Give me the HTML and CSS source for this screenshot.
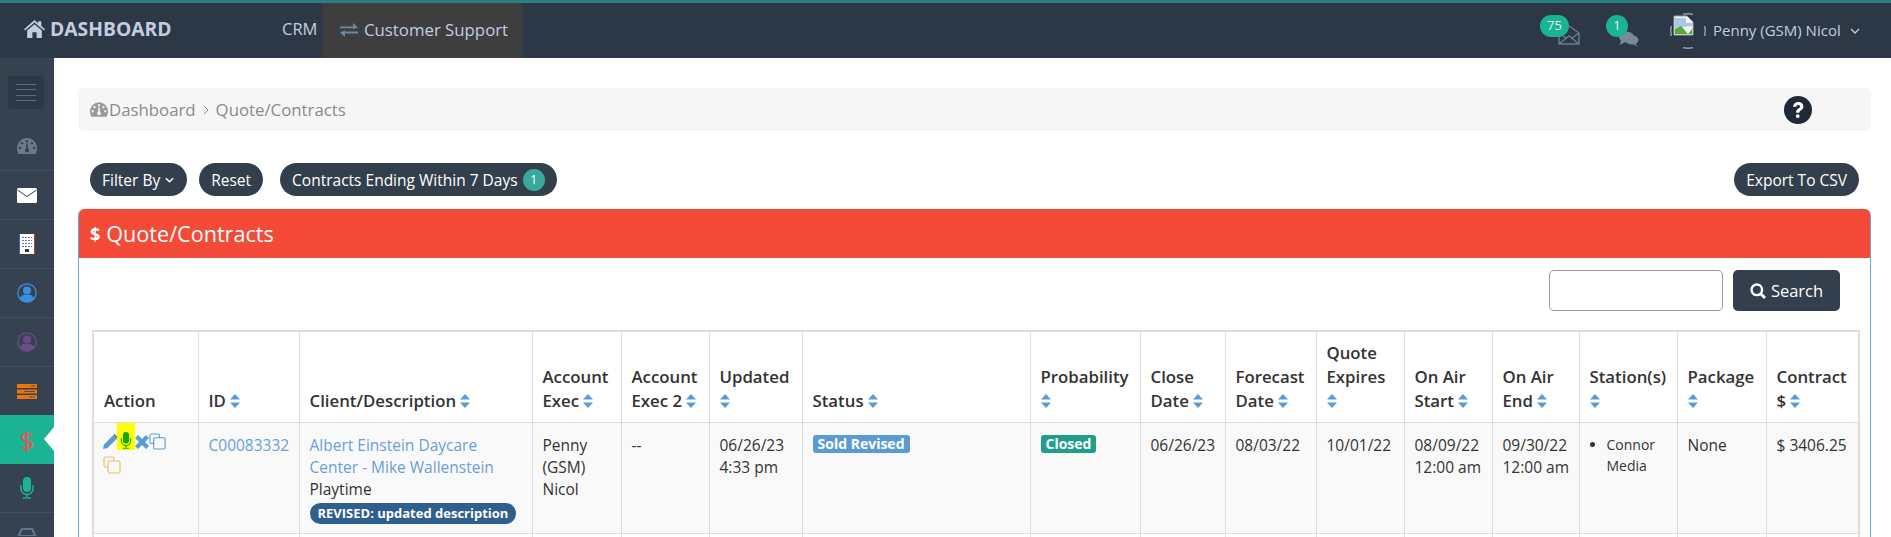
FILE: index.html
```html
<!DOCTYPE html>
<html lang="en">
<head>
<meta charset="utf-8">
<title>Quote/Contracts</title>
<link rel="stylesheet" href="styles.css">
</head>
<body>
<svg class="defs" aria-hidden="true">
  <defs>
    <symbol id="sort" viewBox="0 0 10 14"><path d="M5 0 10 5.6H0ZM5 14 0 8.4H10Z"/></symbol>
    <symbol id="gauge" viewBox="0 0 20 16"><path fill-rule="evenodd" d="M10 0a10 10 0 0 1 10 10c0 2.2-.6 4.200-1.600 6H1.600C.6 14.200 0 12.200 0 10A10 10 0 0 1 10 0ZM10 2a1.300 1.300 0 1 0 0 2.600A1.300 1.300 0 0 0 10 2ZM5 4a1.300 1.300 0 1 0 0 2.600A1.300 1.300 0 0 0 5 4ZM15 4a1.300 1.300 0 1 0 0 2.600A1.300 1.300 0 0 0 15 4ZM3 8.700a1.300 1.300 0 1 0 0 2.600 1.300 1.300 0 0 0 0-2.600ZM17 8.700a1.300 1.300 0 1 0 0 2.600 1.300 1.300 0 0 0 0-2.600ZM9.300 5.500 9 10.500a2 2 0 1 0 2 0L10.700 5.500Z"/></symbol>
    <symbol id="mic" viewBox="0 0 14 22"><rect x="3" y="0" width="8" height="15" rx="4"/><path d="M1 8v3.500a6 6 0 0 0 12 0V8" fill="none" stroke="currentColor" stroke-width="1.500"/><path d="M7 17v3M3 21h8" fill="none" stroke="currentColor" stroke-width="1.500"/></symbol>
    <symbol id="person" viewBox="0 0 20 20"><circle cx="10" cy="10" r="9.200" fill="none" stroke="currentColor" stroke-width="1.300"/><circle cx="10" cy="7.500" r="4"/><path d="M2.800 15.500c.8-2.600 3-3.700 4.700-3.700h5c1.700 0 3.900 1.100 4.700 3.700A9 9 0 0 1 10 19.400a9 9 0 0 1-7.200-3.900Z"/></symbol>
    <symbol id="copy" viewBox="0 0 18 18"><path d="M11 5V2.500A1.500 1.500 0 0 0 9.500 1h-7A1.500 1.500 0 0 0 1 2.500v7A1.500 1.500 0 0 0 2.500 11H5" fill="none" stroke="currentColor" stroke-width="1.200"/><rect x="5" y="5" width="12" height="12" rx="1.500" fill="none" stroke="currentColor" stroke-width="1.200"/></symbol>
  </defs>
</svg>

<header class="topbar">
  <a class="brand">
    <svg class="brand-icon" viewBox="0 0 20 17"><path d="M10 0 13.500 3V1H16.500V5.600L20 8.800 19 10 10 2.400 1 10 0 8.800ZM10 4 17 10V17H12V11.500H8V17H3V10Z"/></svg>
    DASHBOARD
  </a>
  <a class="nav-link">CRM</a>
  <a class="nav-tab">
    <svg class="tab-icon" viewBox="0 0 18 14"><path d="M0 3.500H13V0L18 4.500 13 6.300V5.300H0ZM18 8.500H5V7.500L0 9.500 5 14V10.500H18Z"/></svg>
    Customer Support
  </a>
  <div class="top-right">
    <div class="notice notice-mail">
      <span class="count count-wide">75</span>
      <svg class="mail-open" viewBox="0 0 22 20"><path d="M1 8 11 1 21 8V19H1ZM1 8 8 13M21 8 14 13M1 19 11 11 21 19" fill="none" stroke="currentColor" stroke-width="1.400"/></svg>
    </div>
    <div class="notice notice-chat">
      <span class="count">1</span>
      <svg class="chat" viewBox="0 0 20 16"><ellipse cx="7.500" cy="6" rx="7.500" ry="5.500"/><path d="M2 9 1 14 6 11Z"/><ellipse cx="13" cy="9" rx="6.500" ry="4.500"/><path d="M16 12 19 16 14 13Z"/></svg>
    </div>
    <svg class="avatar" viewBox="0 0 36 36">
      <path d="M13 1.200Q18 .4 23 1.200M13 34.800Q18 35.600 23 34.800M1.200 13Q.4 18 1.200 23M34.800 13Q35.600 18 34.800 23" fill="none" stroke="#c3cde0" stroke-width="1"/>
      <path d="M4 3H17L23 9V22H4Z" fill="#f4f6f2" stroke="#9aa3a8"/>
      <path d="M5 5H16V10H22V13L5 15Z" fill="#a9c8ea"/>
      <path d="M5 21V16L11 13 18 21Z" fill="#5aa83a"/>
      <path d="M18 21 22 16V21Z" fill="#5aa83a"/>
    </svg>
    <span class="user-name">Penny (GSM) Nicol</span>
    <svg class="user-caret" viewBox="0 0 10 6"><path d="M1 1 5 5 9 1" fill="none" stroke="currentColor" stroke-width="1.300"/></svg>
  </div>
</header>

<div class="layout">
  <aside class="sidebar">
    <div class="side-top">
      <button class="side-toggle"><span></span><span></span><span></span><span></span></button>
    </div>
    <div class="side-item"><svg class="si si-gauge"><use href="#gauge"/></svg></div>
    <div class="side-item"><svg class="si si-mail" viewBox="0 0 20 15"><rect x="0" y="0" width="20" height="15" rx="1.500" fill="#fff"/><path d="M0.500 2 10 8.500 19.500 2" fill="none" stroke="#36424f" stroke-width="1"/></svg></div>
    <div class="side-item">
      <svg class="si si-building" viewBox="0 0 16 20"><rect width="16" height="20" fill="#fff"/><rect x="0" width="1" height="20" fill="#3b5ec9"/><rect x="15" width="1" height="20" fill="#c93b3b"/><path d="M3 3h2v1H3zM6 3h2v1H6zM9 3h2v1H9zM12 3h1v1h-1zM3 6h2v1H3zM6 6h2v1H6zM9 6h2v1H9zM12 6h1v1h-1zM3 9h2v1H3zM6 9h2v1H6zM9 9h2v1H9zM12 9h1v1h-1zM3 12h2v1H3zM6 12h2v1H6zM9 12h2v1H9zM12 12h1v1h-1z" fill="#6a72a8"/><rect x="6" y="15" width="4" height="3" fill="#2c3845"/></svg>
    </div>
    <div class="side-item"><svg class="si si-blue"><use href="#person"/></svg></div>
    <div class="side-item"><svg class="si si-purple"><use href="#person"/></svg></div>
    <div class="side-item">
      <svg class="si si-server" viewBox="0 0 20 15"><path d="M0 0H20V4H0ZM0 5.500H20V9.500H0ZM0 11H20V15H0Z" fill="#e8760c"/><path d="M14 1.500h4v1h-4zM7 7h11v1H7zM12 12.500h6v1h-6z" fill="#5a4a58"/></svg>
    </div>
    <div class="side-item side-active"><span class="side-dollar">$</span></div>
    <div class="side-item"><svg class="si si-mic"><use href="#mic"/></svg></div>
    <div class="side-item side-last">
      <svg class="si si-car" viewBox="0 0 22 18"><path d="M5 1H17L20 8 22 10V18H0V10L2 8ZM6.500 3 4.500 8H17.500L15.500 3Z" fill-rule="evenodd"/></svg>
    </div>
  </aside>

  <main class="content">
    <nav class="crumbs">
      <svg class="crumb-gauge"><use href="#gauge"/></svg>
      <span>Dashboard</span>
      <svg class="crumb-sep" viewBox="0 0 6 10"><path d="M1 1 5 5 1 9" fill="none" stroke="currentColor" stroke-width="1"/></svg>
      <span>Quote/Contracts</span>
      <svg class="help" viewBox="0 0 24 24"><circle cx="12" cy="12" r="12" fill="#1f2937"/><path d="M7.800 9.300C8 6.800 9.800 5.200 12.300 5.200c2.500 0 4.300 1.600 4.300 3.700 0 1.800-1 2.700-2.200 3.500-1 .6-1.200 1-1.200 2h-2.800c0-1.800.6-2.800 1.900-3.600 1-.7 1.500-1.100 1.500-1.800 0-.8-.7-1.300-1.500-1.300-1 0-1.600.6-1.800 1.600Z" fill="#fff"/><rect x="10.400" y="15.800" width="2.800" height="2.900" rx=".4" fill="#fff"/></svg>
    </nav>

    <div class="toolbar">
      <button class="pill pill-filter">Filter By <svg class="pill-caret" viewBox="0 0 10 6"><path d="M1 1 5 5 9 1" fill="none" stroke="currentColor" stroke-width="1.600"/></svg></button>
      <button class="pill pill-reset">Reset</button>
      <button class="pill pill-ending">Contracts Ending Within 7 Days <span class="pill-count">1</span></button>
      <button class="pill pill-export">Export To CSV</button>
    </div>

    <section class="panel">
      <h1 class="panel-head"><span class="panel-dollar">$</span> Quote/Contracts</h1>
      <div class="panel-body">
        <form class="search-row">
          <input class="search-input" type="text" aria-label="Search">
          <button class="search-btn" type="button">
            <svg class="search-icon" viewBox="0 0 16 16"><circle cx="6.800" cy="6.800" r="5.300" fill="none" stroke="currentColor" stroke-width="2.400"/><path d="M10.500 10.500 15 15" stroke="currentColor" stroke-width="2.800"/></svg>
            Search
          </button>
        </form>
        <table class="grid">
          <colgroup>
            <col class="w-action"><col class="w-id"><col class="w-client"><col class="w-exec"><col class="w-exec2"><col class="w-updated"><col class="w-status"><col class="w-prob"><col class="w-close"><col class="w-fore"><col class="w-quote"><col class="w-start"><col class="w-end"><col class="w-station"><col class="w-pack"><col class="w-contract">
          </colgroup>
          <thead>
            <tr>
              <th>Action</th>
              <th>ID <svg class="sort"><use href="#sort"/></svg></th>
              <th>Client/Description <svg class="sort"><use href="#sort"/></svg></th>
              <th>Account Exec <svg class="sort"><use href="#sort"/></svg></th>
              <th>Account Exec 2 <svg class="sort"><use href="#sort"/></svg></th>
              <th>Updated <svg class="sort"><use href="#sort"/></svg></th>
              <th>Status <svg class="sort"><use href="#sort"/></svg></th>
              <th>Probability <svg class="sort"><use href="#sort"/></svg></th>
              <th>Close Date <svg class="sort"><use href="#sort"/></svg></th>
              <th>Forecast Date <svg class="sort"><use href="#sort"/></svg></th>
              <th>Quote Expires <svg class="sort"><use href="#sort"/></svg></th>
              <th>On Air Start <svg class="sort"><use href="#sort"/></svg></th>
              <th>On Air End <svg class="sort"><use href="#sort"/></svg></th>
              <th>Station(s) <svg class="sort"><use href="#sort"/></svg></th>
              <th>Package <svg class="sort"><use href="#sort"/></svg></th>
              <th>Contract $ <svg class="sort"><use href="#sort"/></svg></th>
            </tr>
          </thead>
          <tbody>
            <tr class="row-odd">
              <td>
                <div class="actions">
                  <svg class="a-pencil" viewBox="0 0 15 15"><path d="M0 15 1 10.500 10.500 1 14 4.500 4.500 14Z"/><path d="M11.500 0 15 3.500 14 4.500 10.500 1Z" fill="#2e8b2e"/></svg>
                  <span class="a-mark"><svg class="a-mic"><use href="#mic"/></svg></span>
                  <svg class="a-x" viewBox="0 0 14 14"><path d="M3 0 7 4 11 0 14 3 10 7 14 11 11 14 7 10 3 14 0 11 4 7 0 3Z"/></svg>
                  <svg class="a-copy"><use href="#copy"/></svg>
                  <svg class="a-copy2"><use href="#copy"/></svg>
                </div>
              </td>
              <td><a class="link">C00083332</a></td>
              <td>
                <a class="link">Albert Einstein Daycare Center - Mike Wallenstein</a>
                <div>Playtime</div>
                <span class="note">REVISED: updated description</span>
              </td>
              <td>Penny (GSM) Nicol</td>
              <td>--</td>
              <td>06/26/23 4:33 pm</td>
              <td><span class="tag tag-sold">Sold Revised</span></td>
              <td><span class="tag tag-closed">Closed</span></td>
              <td>06/26/23</td>
              <td>08/03/22</td>
              <td>10/01/22</td>
              <td>08/09/22 12:00 am</td>
              <td>09/30/22 12:00 am</td>
              <td><ul class="stations"><li>Connor Media</li></ul></td>
              <td>None</td>
              <td>$ 3406.25</td>
            </tr>
            <tr class="row-next">
              <td></td><td></td><td></td><td></td><td></td><td></td><td></td><td></td><td></td><td></td><td></td><td></td><td></td><td></td><td></td><td></td>
            </tr>
          </tbody>
        </table>
      </div>
    </section>
  </main>
</div>
</body>
</html>
```

FILE: styles.css
```css
* { box-sizing: border-box; }
html, body { margin: 0; height: 537px; overflow: hidden; background: #fff; }
body { font-family: "Open Sans", sans-serif; font-size: 15.500px; color: #333; }
.defs { display: none; }
svg { fill: currentColor; display: block; }

.topbar { height: 58px; background: #2c3845; border-top: 3px solid #2a7f80; display: flex; align-items: stretch; color: #c3cde0; }
.brand { display: flex; align-items: center; gap: 5px; width: 282px; padding: 0 0 4px 24px; font-size: 19.300px; font-weight: 700; color: #c3cde0; }
.brand-icon { width: 21px; height: 18px; }
.nav-link { display: flex; align-items: center; width: 40px; padding-bottom: 4px; font-size: 16.500px; }
.nav-tab { display: flex; align-items: center; gap: 6px; width: 200px; padding: 0 0 2px 18px; font-size: 16.800px; background: #3e3e3e; }
.tab-icon { width: 18px; height: 14px; color: #6f87a6; }
.top-right { margin-left: auto; display: flex; align-items: center; padding-right: 31px; }
.notice { position: relative; height: 55px; }
.notice-mail { width: 66px; }
.notice-chat { width: 64px; }
.count { position: absolute; left: 0; top: 12px; min-width: 22px; height: 22px; border-radius: 11px; background: #1ab394; color: #e8f4f2; font-size: 13px; line-height: 21px; text-align: center; z-index: 1; }
.count-wide { width: 29px; }
.mail-open { position: absolute; left: 18px; top: 22px; width: 22px; height: 20px; color: #6b7a8f; }
.chat { position: absolute; left: 13px; top: 28px; width: 20px; height: 16px; color: #7b889c; }
.avatar { width: 36px; height: 36px; margin-right: 7px; flex: none; }
.user-name { width: 137px; padding-bottom: 2px; font-size: 15px; white-space: nowrap; }
.user-caret { width: 10px; height: 6px; }

.layout { display: flex; height: 479px; overflow: hidden; }
.sidebar { width: 54px; flex: none; height: 479px; background: #36424f; overflow: hidden; }
.side-top { height: 64px; padding: 18px 8px 0; }
.side-toggle { width: 36px; height: 33px; padding: 8px 8px; border: 0; border-radius: 4px; background: #2c3845; display: flex; flex-direction: column; justify-content: space-between; }
.side-toggle span { display: block; height: 1px; background: #5f6b7a; }
.side-item { height: 49px; display: flex; align-items: center; justify-content: center; border-bottom: 1px solid #43505e; position: relative; }
.side-last { height: 23px; border-bottom: 0; align-items: flex-start; overflow: hidden; padding-top: 14px; }
.si { display: block; }
.si-gauge { width: 20px; height: 16px; color: #6c7a8c; }
.si-mail { width: 20px; height: 15px; }
.si-building { width: 16px; height: 20px; }
.si-blue { width: 20px; height: 20px; color: #3a8fdc; }
.si-purple { width: 20px; height: 20px; color: #6b4a85; }
.si-server { width: 20px; height: 15px; }
.side-active { background: #1ab394; border-bottom: 0; margin-top: -1px; }
.side-active::after { content: ""; position: absolute; right: 0; top: 12px; border: 12px solid transparent; border-left: 0; border-right: 10px solid #fff; }
.side-dollar { color: #ef5350; font-size: 26px; font-weight: 400; line-height: 1; }
.si-mic { width: 14px; height: 22px; color: #1ab394; }
.si-car { width: 22px; height: 18px; flex: none; color: #5f7693; }

.content { flex: 1; min-width: 0; height: 479px; overflow: hidden; padding: 30px 20px 0 24px; }
.crumbs { height: 43px; background: #f6f6f6; border-radius: 5px; display: flex; align-items: center; padding: 0 12px; font-size: 16.800px; color: #8a8a8a; }
.crumb-gauge { width: 18px; height: 15px; margin-right: 1px; color: #9a9a9a; }
.crumb-sep { width: 6px; height: 10px; margin: 0 7px; }
.help { width: 28px; height: 28px; margin-left: auto; margin-right: 47px; }

.toolbar { display: flex; align-items: center; gap: 12px; margin: 32px 12px 13px 12px; }
.pill { height: 33px; border: 0; border-radius: 17px; background: #343f4d; color: #fff; font: 500 15.500px "Open Sans", sans-serif; padding: 0 12px; display: flex; align-items: center; gap: 5px; white-space: nowrap; }
.pill-filter { padding: 0 13px 0 12px; }
.pill-caret { width: 9px; height: 6px; }
.pill-ending { margin-left: 5px; }
.pill-count { width: 22px; height: 22px; border-radius: 50%; background: #39a9a0; font-size: 12px; line-height: 22px; text-align: center; }
.pill-export { margin-left: auto; }

.panel { border: 1px solid #5dade2; border-top: 0; border-bottom: 0; border-radius: 6px 6px 0 0; height: 328px; overflow: hidden; }
.panel-head { height: 49px; background: #f44a38; color: #fff; font-size: 21.600px; font-weight: 400; padding: 0 13px 0 11px; display: flex; align-items: center; gap: 6px; line-height: 1; margin: 0; }
.panel-dollar { font-size: 18px; font-weight: 700; }
.panel-body { padding: 12px 13px 0; }
.search-row { display: flex; justify-content: flex-end; gap: 10px; padding-right: 17px; margin-bottom: 19px; }
.search-input { width: 174px; height: 41px; border: 1px solid #999; border-radius: 5px; background: #fff; }
.search-btn { width: 107px; height: 41px; border: 0; border-radius: 5px; background: #343f4d; color: #fff; font: 500 16.500px "Open Sans", sans-serif; display: flex; align-items: center; justify-content: center; gap: 5px; }
.search-icon { width: 16px; height: 16px; }

.grid { table-layout: fixed; width: 1766px; border-collapse: collapse; border: 2px solid #ddd; border-bottom: 0; line-height: 22px; }
.grid th, .grid td { border: 1px solid #ddd; text-align: left; overflow: hidden; }
.grid th { vertical-align: bottom; font-size: 16.800px; font-weight: 600; color: #333; line-height: 24px; padding: 9px 10px 9px; }
.grid td { vertical-align: top; padding: 11px 5px 8px 10px; }
.row-odd { background: #f9f9f9; height: 111px; }
.grid .row-next td { height: 5px; padding: 0; border-bottom: 0; }
.sort { display: inline-block; width: 10px; height: 14px; color: #5b9bd5; vertical-align: -1px; }
.w-action { width: 105px; } .w-id { width: 101px; } .w-client { width: 233px; } .w-exec { width: 89px; }
.w-exec2 { width: 88px; } .w-updated { width: 93px; } .w-status { width: 228px; } .w-prob { width: 110px; }
.w-close { width: 85px; } .w-fore { width: 91px; } .w-quote { width: 88px; } .w-start { width: 88px; }
.w-end { width: 87px; } .w-station { width: 98px; } .w-pack { width: 89px; } .w-contract { width: 93px; }
.link { color: #6a9fd8; }
.note { display: inline-block; height: 21px; padding: 0 8px; border-radius: 11px; background: #2f5f8f; color: #fff; font-size: 13px; font-weight: 700; line-height: 20px; white-space: nowrap; margin-top: 3px; }
.tag { display: inline-block; height: 18px; padding: 0 5px; border-radius: 3px; color: #fff; font-size: 14px; font-weight: 700; line-height: 18px; white-space: nowrap; vertical-align: 2px; }
.tag-sold { background: #5b9bd5; }
.tag-closed { background: #1f9e8a; }
.stations { margin: 0; padding: 0 0 0 17px; font-size: 14px; line-height: 21px; }
.actions { display: flex; flex-wrap: wrap; align-items: center; width: 64px; margin: -1px 0 0 -1px; }
.a-pencil { width: 15px; height: 15px; color: #5b9bd5; }
.a-mark { width: 18px; height: 27px; margin: -10px 0 0 -1px; background: #ffff00; display: flex; align-items: flex-end; justify-content: center; padding-bottom: 1px; }
.a-mic { width: 12px; height: 17px; color: #12a812; }
.a-x { width: 14px; height: 14px; color: #5b9bd5; }
.a-copy { width: 17px; height: 17px; color: #5b9bd5; }
.a-copy2 { width: 18px; height: 18px; color: #e6bf72; margin-top: 6px; }
```
